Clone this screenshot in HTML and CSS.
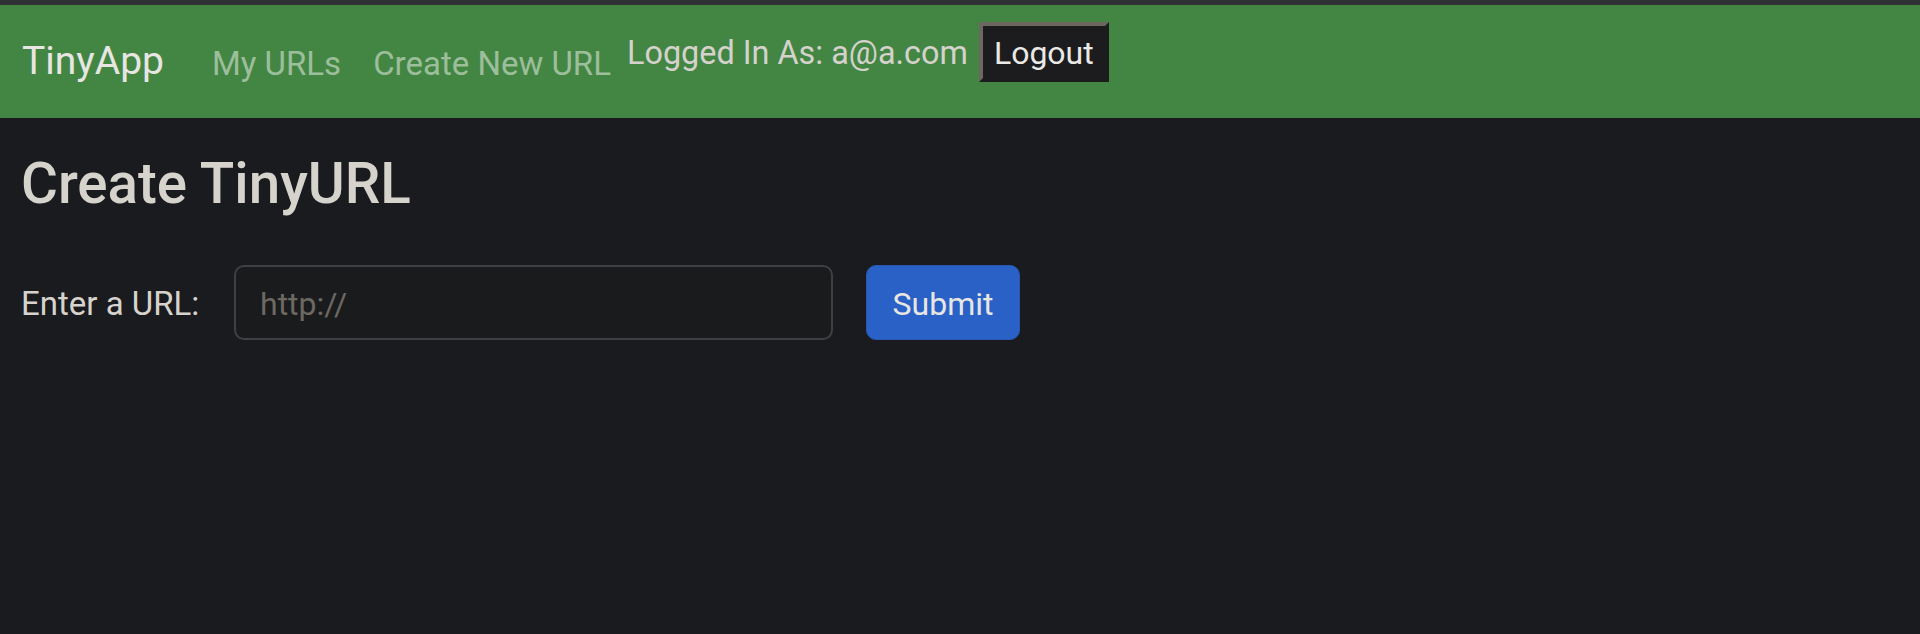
FILE: index.html
```html
<!DOCTYPE html>
<html lang="en">
<head>
<meta charset="utf-8">
<title>TinyApp - Create TinyURL</title>
<link rel="stylesheet" href="styles.css">
</head>
<body>
<div class="topbar"></div>
<nav class="navbar">
  <a class="brand" href="#">TinyApp</a>
  <ul class="nav">
    <li><a class="nav-link" href="#">My URLs</a></li>
    <li><a class="nav-link" href="#">Create New URL</a></li>
  </ul>
  <div class="user">
    <span class="user-text">Logged In As: a@a.com</span>
    <form class="logout-form"><button type="button" class="logout-btn">Logout</button></form>
  </div>
</nav>
<main class="main">
  <h1 class="title">Create TinyURL</h1>
  <form class="url-form">
    <label class="url-label" for="longURL">Enter a URL:</label>
    <input class="url-input" id="longURL" type="text" placeholder="http://">
    <button type="button" class="submit-btn">Submit</button>
  </form>
</main>
</body>
</html>
```

FILE: styles.css
```css
* { box-sizing: border-box; }

html, body {
  margin: 0;
  padding: 0;
  background: #1a1b1e;
  font-family: "Roboto", "Liberation Sans", Arial, sans-serif;
  color: #d6d3cd;
}

.topbar {
  height: 5px;
  background: #303134;
}

.navbar {
  display: flex;
  align-items: center;
  height: 113px;
  padding: 0 22px;
  background: #438644;
}

.brand {
  font-size: 39px;
  line-height: 1.5;
  color: #e8e6e3;
  text-decoration: none;
  margin-right: 32px;
}

.nav {
  display: flex;
  list-style: none;
  margin: 0;
  padding: 0;
}

.nav-link {
  display: block;
  font-size: 33px;
  line-height: 1.5;
  padding: 8px 16px 4px;
  color: #9dbe9b;
  text-decoration: none;
}

.user {
  display: flex;
  align-items: baseline;
  gap: 11px;
  align-self: flex-start;
  margin-top: 17px;
}

.user-text {
  font-size: 32.4px;
  line-height: 1.5;
  color: #d5d2cc;
}

.logout-form { margin: 0; display: flex; }

.logout-btn {
  font-family: inherit;
  font-size: 32px;
  line-height: 32px;
  padding: 11px 11px 9px;
  background: #1c1c1e;
  color: #ebe9e6;
  border-style: solid;
  border-width: 4px;
  border-color: #6c675f #1c1c1e #1c1c1e #6c675f;
  border-radius: 0;
}

.main {
  padding: 33px 21px 0;
}

.title {
  margin: 0;
  font-size: 56.5px;
  font-weight: 500;
  line-height: 1.2;
  color: #d6d3cd;
}

.url-form {
  display: flex;
  align-items: center;
  margin-top: 46px;
}

.url-label {
  width: 179px;
  margin-right: 34px;
  font-size: 33px;
  line-height: 1.5;
  padding-top: 2px;
  color: #d6d3cd;
}

.url-input {
  width: 599px;
  height: 75px;
  padding: 3px 24px 0;
  font-family: inherit;
  font-size: 32px;
  color: #d6d3cd;
  background: #1a1b1d;
  border: 2px solid #3e4043;
  border-radius: 10px;
  outline: none;
}

.url-input::placeholder {
  color: #6c6862;
}

.submit-btn {
  width: 154px;
  height: 75px;
  margin-left: 33px;
  padding: 3px 0 0;
  font-family: inherit;
  font-size: 32px;
  color: #e8e6e3;
  background: #2a61c6;
  border: 1px solid #2858b4;
  border-radius: 10px;
}
```
